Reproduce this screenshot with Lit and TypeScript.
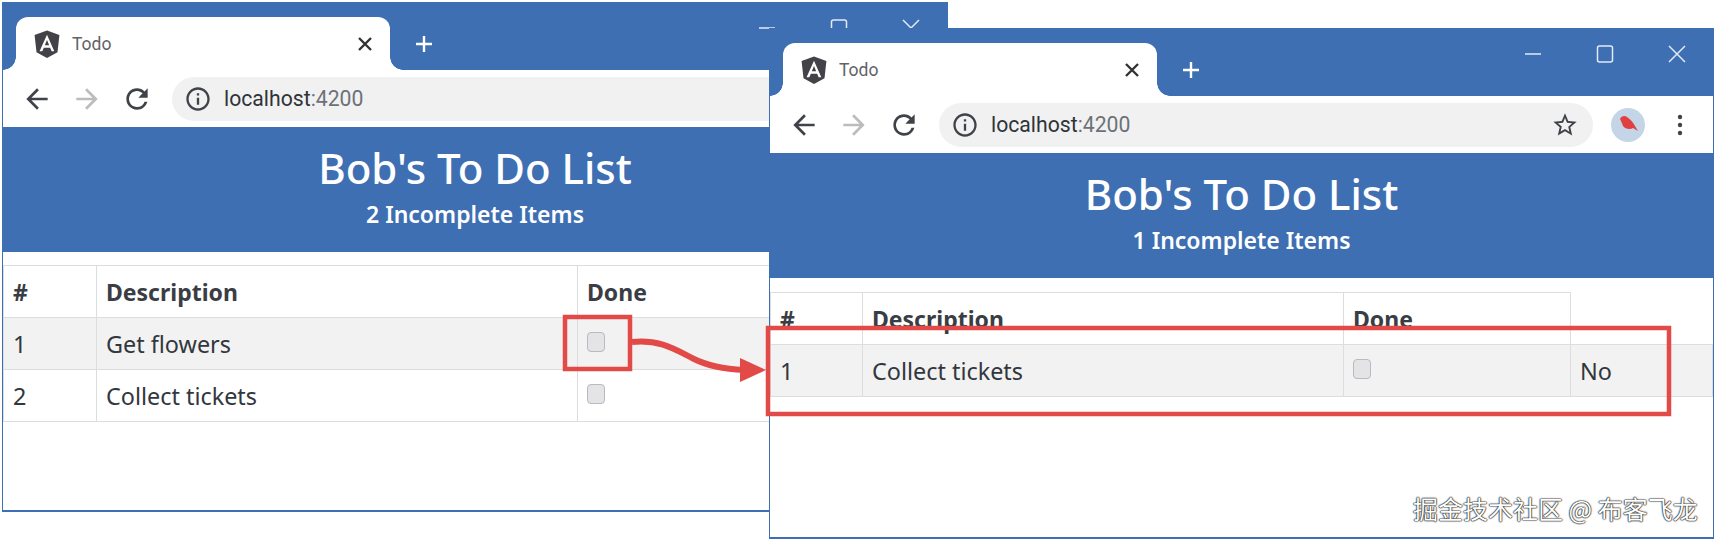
import { LitElement, html, css, svg, nothing } from "lit";
import { customElement, property } from "lit/decorators.js";

const icon = (d: string, cls = "") => html`<svg class="ic ${cls}" viewBox="0 0 24 24"><path d=${d}></path></svg>`;
const BACK = "M20 11H7.83l5.59-5.59L12 4l-8 8 8 8 1.41-1.41L7.83 13H20v-2z";
const FORWARD = "M12 4l-1.41 1.41L16.17 11H4v2h12.17l-5.58 5.59L12 20l8-8z";
const RELOAD = "M17.65 6.35A7.958 7.958 0 0 0 12 4c-4.42 0-7.99 3.58-7.99 8s3.57 8 7.99 8c3.73 0 6.84-2.55 7.73-6h-2.08A5.99 5.99 0 0 1 12 18c-3.31 0-6-2.69-6-6s2.69-6 6-6c1.66 0 3.14.69 4.22 1.78L13 11h7V4l-2.35 2.35z";
const INFO = "M11 7h2v2h-2zm0 4h2v6h-2zm1-9C6.48 2 2 6.48 2 12s4.48 10 10 10 10-4.48 10-10S17.52 2 12 2zm0 18c-4.41 0-8-3.59-8-8s3.59-8 8-8 8 3.59 8 8-3.59 8-8 8z";
const STAR = "M22 9.24l-7.19-.62L12 2 9.19 8.63 2 9.24l5.46 4.73L5.82 21 12 17.27 18.18 21l-1.63-7.03L22 9.24zM12 15.4l-3.76 2.27 1-4.28-3.32-2.88 4.38-.38L12 6.1l1.71 4.04 4.38.38-3.32 2.88 1 4.28L12 15.4z";

@customElement("browser-window")
class BrowserWindow extends LitElement {
  @property({ type: Array }) items: { id: number; task: string; status?: string }[] = [];
  @property({ type: Boolean }) extra = false;
  @property({ type: Number }) count = 0;

  static styles = css`
    :host { display: block; box-sizing: border-box; height: 100%; border: 1px solid #3e6fb3; border-width: 0 1px 2px 1px; background: #fff; font-family: "Noto Sans", sans-serif; }
    .win { display: flex; flex-direction: column; height: 100%; }
    .strip { display: flex; height: 68px; background: #3e6fb3; padding-left: 13px; flex: none; }
    .tab { position: relative; box-sizing: border-box; width: 374px; height: 53px; margin-top: 15px; background: #fff; border-radius: 12px 12px 0 0; display: flex; align-items: center; padding: 0 0 0 15px; }
    .tab::before, .tab::after { content: ""; position: absolute; bottom: 0; width: 13px; height: 13px; }
    .tab::before { left: -13px; background: radial-gradient(circle at 0 0, #3e6fb3 12.5px, #fff 13px); }
    .tab::after { right: -13px; background: radial-gradient(circle at 100% 0, #3e6fb3 12.5px, #fff 13px); }
    .logo { width: 32px; height: 32px; flex: none; }
    .logo .sh { fill: #424248; }
    .logo .a { fill: #fff; }
    .title { margin-left: 9px; font: 17.5px "Roboto", sans-serif; color: #5f6368; flex: 1; }
    .x { width: 20px; height: 20px; margin-right: 15px; stroke: #333; stroke-width: 2.4; fill: none; }
    .plus { width: 20px; height: 20px; margin: 32px 0 0 24px; stroke: #fff; stroke-width: 2.4; fill: none; flex: none; }
    .controls { margin-left: auto; display: flex; height: 52px; }
    .ctl { width: 72px; height: 52px; display: flex; align-items: center; justify-content: center; }
    .ctl svg { width: 18px; height: 18px; stroke: #e3ebf6; stroke-width: 1.5; fill: none; }
    .bar { display: flex; align-items: center; height: 57px; padding: 0 10px 0 9px; background: #fff; flex: none; }
    .btn { width: 50px; height: 50px; display: flex; align-items: center; justify-content: center; flex: none; }
    .btn.more { width: 54px; margin-right: -4px; }
    .ic { width: 32px; height: 32px; fill: #3f4349; flex: none; }
    .ic.dim { fill: #bcbcbf; }
    .addr { flex: 1; margin: 0 10px; height: 44px; border-radius: 22px; background: #f1f1f2; display: flex; align-items: center; padding: 0 14px 0 12px; min-width: 0; }
    .addr .ic { width: 28px; height: 28px; }
    .url { flex: 1; margin-left: 12px; font: 21.2px "Roboto", sans-serif; color: #303338; }
    .url span { color: #6c7178; }
    .avatar { width: 34px; height: 34px; }
    .kebab { width: 26px; height: 26px; }
    .head { box-sizing: border-box; height: 125px; flex: none; background: #3e6fb3; color: #fff; text-align: center; padding-top: 16px; }
    .head h3 { margin: 0; font-size: 42px; line-height: 50px; font-weight: 500; }
    .head h6 { margin: 6px 0 0; font-size: 23px; line-height: 30px; font-weight: 600; }
    table { margin-top: 13px; border-collapse: collapse; table-layout: fixed; width: 100%; color: #32373d; font-size: 23.4px; }
    table.more { margin-top: 14px; }
    col.n { width: 93px; }
    table.more col.n { width: 92px; }
    col.d { width: 481px; }
    col.c { width: 227px; }
    th, td { border: 1px solid #dcdddf; padding: 0 9px; height: 51px; text-align: left; vertical-align: middle; }
    th { font-weight: 700; color: #3a3d44; font-size: 23px; }
    tbody tr:nth-child(odd) { background: #f2f2f2; }
    .cb { display: block; width: 18px; height: 20px; box-sizing: border-box; border: 1.5px solid #b9b9c0; border-radius: 4px; background: #e4e4e6; margin-top: -3px; }
  `;

  render() {
    return html`<div class="win">
      <div class="strip">
        <div class="tab">
          <svg class="logo" viewBox="0 0 250 250"><path class="sh" d="M125 20 28 55l15 135 82 45 82-45 15-135z"></path><path class="a" d="M125 52.200 66.800 182.600h21.700l11.700-29.200h49.400l11.700 29.200H182L125 52.200zm17 83.300h-34l17-40.900 17 40.900z"></path></svg>
          <span class="title">Todo</span>
          <svg class="x" viewBox="0 0 20 20"><path d="M4 4l12 12M16 4 4 16"></path></svg>
        </div>
        <svg class="plus" viewBox="0 0 20 20"><path d="M10 2v16M2 10h16"></path></svg>
        <div class="controls">
          <div class="ctl"><svg viewBox="0 0 18 18"><path d="M1 9h16"></path></svg></div>
          <div class="ctl"><svg viewBox="0 0 18 18"><rect x="1.500" y="1" width="15" height="16" rx="2"></rect></svg></div>
          <div class="ctl"><svg viewBox="0 0 18 18"><path d="M1 1l16 16M17 1 1 17"></path></svg></div>
        </div>
      </div>
      <div class="bar">
        <div class="btn">${icon(BACK)}</div>
        <div class="btn">${icon(FORWARD, "dim")}</div>
        <div class="btn">${icon(RELOAD)}</div>
        <div class="addr">
          ${icon(INFO)}
          <div class="url">localhost<span>:4200</span></div>
          ${icon(STAR)}
        </div>
        <div class="btn">
          <svg class="avatar" viewBox="0 0 34 34"><circle cx="17" cy="17" r="17" fill="#c3d5e6"></circle><path fill="#e0403f" d="M9 11c1-3 5-4 7-2 3 2 6 5 8 9l3 5-5-3c-3 2-8 1-10-2-1-3-2-5-3-7z"></path></svg>
        </div>
        <div class="btn more">
          <svg class="kebab" viewBox="0 0 26 26" fill="#3f4349"><circle cx="13" cy="5" r="2.200"></circle><circle cx="13" cy="13" r="2.200"></circle><circle cx="13" cy="21" r="2.200"></circle></svg>
        </div>
      </div>
      <div class="head">
        <h3>Bob's To Do List</h3>
        <h6>${this.count} Incomplete Items</h6>
      </div>
      <table class=${this.extra ? "more" : ""}>
        <colgroup>
          <col class="n" /><col class="d" />
          ${this.extra ? html`<col class="c" /><col />` : html`<col />`}
        </colgroup>
        <thead><tr><th>#</th><th>Description</th><th>Done</th></tr></thead>
        <tbody>
          ${this.items.map(
            (it) => html`<tr>
              <td>${it.id}</td>
              <td>${it.task}</td>
              <td><span class="cb"></span></td>
              ${this.extra ? html`<td>${it.status}</td>` : nothing}
            </tr>`
          )}
        </tbody>
      </table>
    </div>`;
  }
}

@customElement("app-root")
class AppRoot extends LitElement {
  static styles = css`
    :host { display: block; position: relative; width: 1716px; height: 541px; overflow: hidden; background: #fff; }
    .w { position: absolute; }
    .w1 { left: 2px; top: 2px; width: 946px; height: 510px; }
    .w2 { left: 769px; top: 28px; width: 945px; height: 511px; }
    .notes { position: absolute; left: 0; top: 0; width: 1716px; height: 541px; pointer-events: none; }
    .mark { position: absolute; left: 1413px; top: 491px; font: 25px/34px "Noto Sans CJK SC", "Noto Sans", sans-serif; color: #fff; text-shadow: 0 0 1.5px #111, 0 0 1.5px #111, 0 0 1px #111; white-space: nowrap; }
  `;
  render() {
    return html`
      <browser-window class="w w1" .count=${2} .items=${[{ id: 1, task: "Get flowers" }, { id: 2, task: "Collect tickets" }]}></browser-window>
      <browser-window class="w w2" extra .count=${1} .items=${[{ id: 1, task: "Collect tickets", status: "No" }]}></browser-window>
      <svg class="notes" viewBox="0 0 1716 541">
        ${svg`<g fill="none" stroke="#e14a46" stroke-width="4.500">
          <rect x="565" y="317" width="65" height="52"></rect>
          <rect x="768" y="328" width="901" height="86"></rect>
          <path stroke-width="6" d="M632 342c28-3 44 8 62 17 14 7 30 10 50 11"></path>
        </g>
        <polygon fill="#e14a46" points="740,358 766,370 740,382"></polygon>`}
      </svg>
      <div class="mark">掘金技术社区 @ 布客飞龙</div>
    `;
  }
}
